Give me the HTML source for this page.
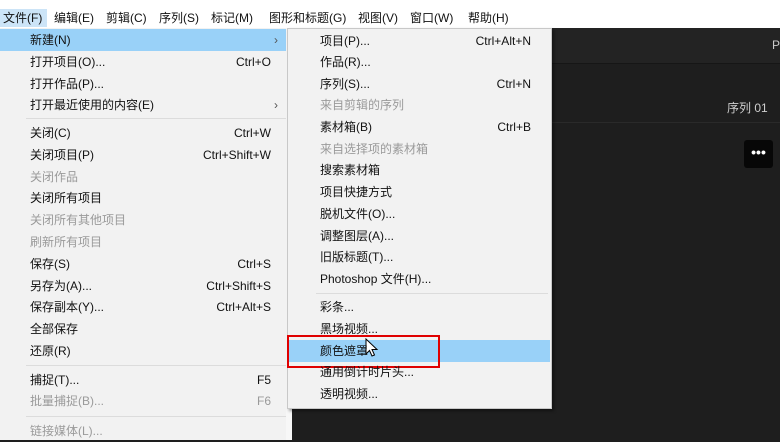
<!DOCTYPE html>
<html><head><meta charset="utf-8"><style>
*{margin:0;padding:0;box-sizing:border-box}
body{width:780px;height:440px;overflow:hidden;background:#1e1e1e;position:relative;font-family:"Liberation Sans","Noto Sans CJK SC",sans-serif;font-size:12px;color:#111}
.abs{position:absolute}
#bar{left:0;top:0;width:780px;height:28px;background:#fff}
#bar span{position:absolute;top:10px;line-height:16px;font-size:12px}
.menu{background:#f2f2f2;}
.it{position:absolute;height:22px;line-height:22px;white-space:nowrap}
.g{color:#9a9a9a}
.sc{position:absolute;text-align:right;white-space:nowrap;height:22px;line-height:22px}
.sep{position:absolute;height:1px;background:#dcdcdc}
</style></head><body>
<div id="bar" class="abs">
<span style="left:0;width:47px;height:18px;top:9px;background:#cce4f7"></span>
<span style="left:3px">文件(F)</span>
<span style="left:54px">编辑(E)</span>
<span style="left:106px">剪辑(C)</span>
<span style="left:159px">序列(S)</span>
<span style="left:211px">标记(M)</span>
<span style="left:269px">图形和标题(G)</span>
<span style="left:358px">视图(V)</span>
<span style="left:410px">窗口(W)</span>
<span style="left:468px">帮助(H)</span>
</div>
<!-- dark panel -->
<div class="abs" style="left:292px;top:28px;width:488px;height:35px;background:#232323"></div>
<div class="abs" style="left:292px;top:63px;width:488px;height:1px;background:#161616"></div>
<div class="abs" style="left:292px;top:122px;width:488px;height:1px;background:#2a2a2a"></div>
<div class="abs" style="left:727px;top:99px;color:#cfcfcf;font-size:12px">序列 01</div>
<div class="abs" style="left:744px;top:140px;width:29px;height:28px;background:#070707;border-radius:3px;color:#fff;font-size:14px;text-align:center;line-height:24px;font-weight:bold">•••</div>
<div class="abs" style="left:772px;top:38px;width:8px;height:16px;color:#ccc">P</div>
<!-- left menu -->
<div class="abs menu" style="left:0;top:28px;width:287px;height:412px"></div>
<div class="abs" style="left:0;top:29px;width:286px;height:22px;background:#99d1f8"></div>
<div class="abs" style="left:286px;top:28px;width:6px;height:412px;background:#f7f7f7"></div>
<div id="L"></div>
<!-- submenu -->
<div class="abs" style="left:287px;top:28px;width:265px;height:381px;background:#f2f2f2;border:1px solid #c8c8c8;box-shadow:2px 2px 3px rgba(0,0,0,.4)"></div>
<div class="abs" style="left:288px;top:340px;width:262px;height:22px;background:#99d1f8"></div>
<div class="abs" style="left:287px;top:335px;width:153px;height:33px;border:2px solid #e00000"></div>
<svg class="abs" style="left:365px;top:338px" width="14" height="20" viewBox="0 0 14 20"><path d="M1 1 L1 16 L4.5 12.5 L7 18 L9.5 17 L7 11.5 L12 11.5 Z" fill="#fff" stroke="#000" stroke-width="1"/></svg>
<div id="S"></div>
<script>
var L=[["新建(N)",40,"","›"],["打开项目(O)...",62,"Ctrl+O"],["打开作品(P)...",84],["打开最近使用的内容(E)",105,"","›"],["-",118],["关闭(C)",133,"Ctrl+W"],["关闭项目(P)",155,"Ctrl+Shift+W"],["关闭作品",177,"",0,1],["关闭所有项目",198],["关闭所有其他项目",220,"",0,1],["刷新所有项目",242,"",0,1],["保存(S)",264,"Ctrl+S"],["另存为(A)...",286,"Ctrl+Shift+S"],["保存副本(Y)...",307,"Ctrl+Alt+S"],["全部保存",329],["还原(R)",351],["-",365],["捕捉(T)...",380,"F5"],["批量捕捉(B)...",401,"F6",0,1],["-",416],["链接媒体(L)...",431,"",0,1]];
var S=[["项目(P)...",41,"Ctrl+Alt+N"],["作品(R)...",62],["序列(S)...",84,"Ctrl+N"],["来自剪辑的序列",105,"",0,1],["素材箱(B)",127,"Ctrl+B"],["来自选择项的素材箱",149,"",0,1],["搜索素材箱",170],["项目快捷方式",192],["脱机文件(O)...",214],["调整图层(A)...",236],["旧版标题(T)...",257],["Photoshop 文件(H)...",279],["-",293],["彩条...",307],["黑场视频...",329],["颜色遮罩",351],["通用倒计时片头...",372],["透明视频...",394]];
function build(arr,x0,right,sepL,sepW){var h="";arr.forEach(function(r){
if(r[0]=="-"){h+='<div class="sep" style="left:'+sepL+'px;top:'+r[1]+'px;width:'+sepW+'px"></div>';return;}
var t=r[1]-11;h+='<div class="it'+(r[4]?' g':'')+'" style="left:'+x0+'px;top:'+t+'px">'+r[0]+'</div>';
if(r[2])h+='<div class="sc'+(r[4]?' g':'')+'" style="right:'+(780-right)+'px;top:'+t+'px">'+r[2]+'</div>';
if(r[3])h+='<div class="sc" style="left:274px;top:'+t+'px;color:#555">'+r[3]+'</div>';});return h;}
document.getElementById("L").innerHTML=build(L,30,271,26,260);
document.getElementById("S").innerHTML=build(S,320,531,316,232);
</script>
</body></html>
